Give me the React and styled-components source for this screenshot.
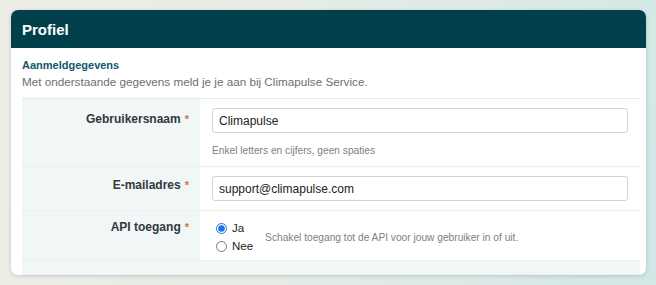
import styled, { createGlobalStyle } from "styled-components";

const GlobalStyle = createGlobalStyle`
  html, body {
    margin: 0;
    padding: 0;
  }
  body {
    font-family: "Liberation Sans", Arial, sans-serif;
    background: linear-gradient(100deg, #eeeee6 0%, #e6ece6 45%, #d2e8e6 100%);
    min-height: 285px;
  }
`;

const Page = styled.div`
  padding: 10px 10px 10px 11px;
  height: 285px;
  box-sizing: border-box;
`;

const Card = styled.section`
  background: #ffffff;
  border-radius: 7px;
  overflow: hidden;
  box-shadow: 0 1px 4px rgba(0, 40, 50, 0.18);
  height: 265px;
`;

const Header = styled.header`
  background: #013f4a;
  height: 38px;
  display: flex;
  align-items: center;
  padding: 0 11px;
  h1 {
    margin: 0;
    color: #ffffff;
    font-size: 15px;
    font-weight: 700;
  }
`;

const Body = styled.div`
  padding: 10px 6px 0 11px;
`;

const SectionTitle = styled.h2`
  margin: 0;
  font-size: 11px;
  font-weight: 700;
  color: #10596a;
  line-height: 14px;
`;

const SectionText = styled.p`
  margin: 2px 0 9px;
  font-size: 11.7px;
  color: #6b7075;
  line-height: 15px;
`;

const Table = styled.div`
  border-top: 1px solid #e6eaeb;
`;

const Row = styled.div`
  display: grid;
  grid-template-columns: 178px 1fr;
  border-bottom: 1px solid #eceff0;
  min-height: ${(p) => p.h}px;
  box-sizing: border-box;
  background: ${(p) => (p.$filled ? "#f1f6f7" : "transparent")};
`;

const Label = styled.div`
  background: #f1f6f7;
  text-align: right;
  padding: ${(p) => p.$top}px 11px 0 0;
  font-size: 12px;
  font-weight: 700;
  color: #33383c;
  span {
    color: #e06b3a;
    margin-left: 4px;
    font-size: 11px;
  }
`;

const Value = styled.div`
  padding: ${(p) => p.$top}px 12px 0 12px;
`;

const Input = styled.input`
  display: block;
  width: 100%;
  box-sizing: border-box;
  height: 25px;
  border: 1px solid #cfd3d5;
  border-radius: 3px;
  padding: 0 6px;
  font-family: inherit;
  font-size: 12px;
  color: #222;
  background: #fff;
`;

const Help = styled.div`
  font-size: 10.2px;
  color: #7b8186;
  margin-top: ${(p) => p.$mt || 0}px;
`;

const RadioRow = styled.div`
  display: flex;
  align-items: center;
  gap: 12px;
`;

const RadioGroup = styled.div`
  display: flex;
  flex-direction: column;
  gap: 3px;
`;

const RadioLabel = styled.label`
  display: flex;
  align-items: center;
  gap: 5px;
  font-size: 11.5px;
  color: #222;
  line-height: 15px;
  input {
    margin: 0 0 0 4px;
    width: 11px;
    height: 11px;
    accent-color: #1a73e8;
  }
`;

export default function App() {
  return (
    <>
      <GlobalStyle />
      <Page>
        <Card>
          <Header>
            <h1>Profiel</h1>
          </Header>
          <Body>
            <SectionTitle>Aanmeldgegevens</SectionTitle>
            <SectionText>
              Met onderstaande gegevens meld je je aan bij Climapulse Service.
            </SectionText>
            <Table>
              <Row h={68}>
                <Label $top={13}>
                  Gebruikersnaam<span>*</span>
                </Label>
                <Value $top={9}>
                  <Input defaultValue="Climapulse" />
                  <Help $mt={12}>Enkel letters en cijfers, geen spaties</Help>
                </Value>
              </Row>
              <Row h={44}>
                <Label $top={11}>
                  E-mailadres<span>*</span>
                </Label>
                <Value $top={9}>
                  <Input defaultValue="support@climapulse.com" />
                </Value>
              </Row>
              <Row h={50}>
                <Label $top={9}>
                  API toegang<span>*</span>
                </Label>
                <Value $top={10}>
                  <RadioRow>
                    <RadioGroup>
                      <RadioLabel>
                        <input type="radio" name="api" defaultChecked />
                        Ja
                      </RadioLabel>
                      <RadioLabel>
                        <input type="radio" name="api" />
                        Nee
                      </RadioLabel>
                    </RadioGroup>
                    <Help>
                      Schakel toegang tot de API voor jouw gebruiker in of uit.
                    </Help>
                  </RadioRow>
                </Value>
              </Row>
              <Row h={14} $filled />
            </Table>
          </Body>
        </Card>
      </Page>
    </>
  );
}
